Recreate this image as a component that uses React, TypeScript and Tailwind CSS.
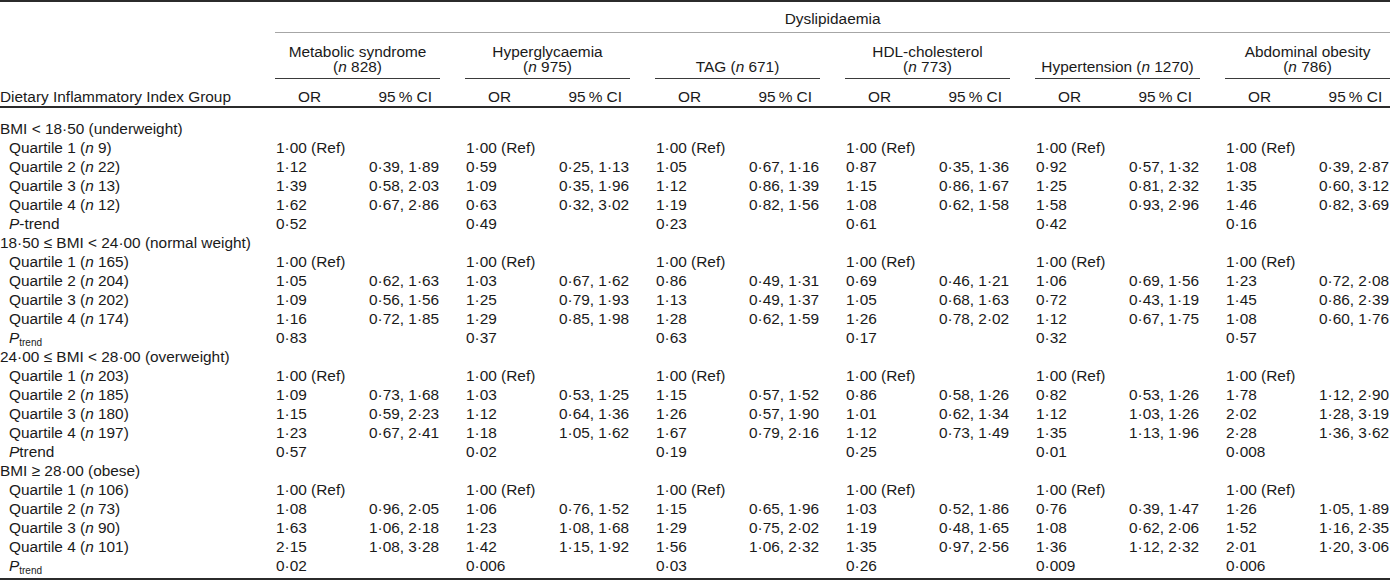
import type { ReactNode } from "react";

type Cell = [string, string];

const REF: Cell[] = Array.from({ length: 6 }, () => ["1·00 (Ref)", ""] as Cell);

const outcomes: { title: ReactNode }[] = [
  { title: <>Metabolic syndrome<br />(<i>n</i> 828)</> },
  { title: <>Hyperglycaemia<br />(<i>n</i> 975)</> },
  { title: <>TAG (<i>n</i> 671)</> },
  { title: <>HDL-cholesterol<br />(<i>n</i> 773)</> },
  { title: <>Hypertension (<i>n</i> 1270)</> },
  { title: <>Abdominal obesity<br />(<i>n</i> 786)</> },
];

const pRow = (vals: string[]): Cell[] => vals.map((v) => [v, ""] as Cell);

const groups: { title: ReactNode; rows: { label: ReactNode; cells: Cell[] }[] }[] = [
  {
    title: <>BMI &lt; 18·50 (underweight)</>,
    rows: [
      { label: <>Quartile 1 (<i>n</i> 9)</>, cells: REF },
      {
        label: <>Quartile 2 (<i>n</i> 22)</>,
        cells: [["1·12", "0·39, 1·89"], ["0·59", "0·25, 1·13"], ["1·05", "0·67, 1·16"], ["0·87", "0·35, 1·36"], ["0·92", "0·57, 1·32"], ["1·08", "0·39, 2·87"]],
      },
      {
        label: <>Quartile 3 (<i>n</i> 13)</>,
        cells: [["1·39", "0·58, 2·03"], ["1·09", "0·35, 1·96"], ["1·12", "0·86, 1·39"], ["1·15", "0·86, 1·67"], ["1·25", "0·81, 2·32"], ["1·35", "0·60, 3·12"]],
      },
      {
        label: <>Quartile 4 (<i>n</i> 12)</>,
        cells: [["1·62", "0·67, 2·86"], ["0·63", "0·32, 3·02"], ["1·19", "0·82, 1·56"], ["1·08", "0·62, 1·58"], ["1·58", "0·93, 2·96"], ["1·46", "0·82, 3·69"]],
      },
      { label: <><i>P</i>-trend</>, cells: pRow(["0·52", "0·49", "0·23", "0·61", "0·42", "0·16"]) },
    ],
  },
  {
    title: <>18·50 ≤ BMI &lt; 24·00 (normal weight)</>,
    rows: [
      { label: <>Quartile 1 (<i>n</i> 165)</>, cells: REF },
      {
        label: <>Quartile 2 (<i>n</i> 204)</>,
        cells: [["1·05", "0·62, 1·63"], ["1·03", "0·67, 1·62"], ["0·86", "0·49, 1·31"], ["0·69", "0·46, 1·21"], ["1·06", "0·69, 1·56"], ["1·23", "0·72, 2·08"]],
      },
      {
        label: <>Quartile 3 (<i>n</i> 202)</>,
        cells: [["1·09", "0·56, 1·56"], ["1·25", "0·79, 1·93"], ["1·13", "0·49, 1·37"], ["1·05", "0·68, 1·63"], ["0·72", "0·43, 1·19"], ["1·45", "0·86, 2·39"]],
      },
      {
        label: <>Quartile 4 (<i>n</i> 174)</>,
        cells: [["1·16", "0·72, 1·85"], ["1·29", "0·85, 1·98"], ["1·28", "0·62, 1·59"], ["1·26", "0·78, 2·02"], ["1·12", "0·67, 1·75"], ["1·08", "0·60, 1·76"]],
      },
      {
        label: <><i>P</i><sub className="text-[10px]">trend</sub></>,
        cells: pRow(["0·83", "0·37", "0·63", "0·17", "0·32", "0·57"]),
      },
    ],
  },
  {
    title: <>24·00 ≤ BMI &lt; 28·00 (overweight)</>,
    rows: [
      { label: <>Quartile 1 (<i>n</i> 203)</>, cells: REF },
      {
        label: <>Quartile 2 (<i>n</i> 185)</>,
        cells: [["1·09", "0·73, 1·68"], ["1·03", "0·53, 1·25"], ["1·15", "0·57, 1·52"], ["0·86", "0·58, 1·26"], ["0·82", "0·53, 1·26"], ["1·78", "1·12, 2·90"]],
      },
      {
        label: <>Quartile 3 (<i>n</i> 180)</>,
        cells: [["1·15", "0·59, 2·23"], ["1·12", "0·64, 1·36"], ["1·26", "0·57, 1·90"], ["1·01", "0·62, 1·34"], ["1·12", "1·03, 1·26"], ["2·02", "1·28, 3·19"]],
      },
      {
        label: <>Quartile 4 (<i>n</i> 197)</>,
        cells: [["1·23", "0·67, 2·41"], ["1·18", "1·05, 1·62"], ["1·67", "0·79, 2·16"], ["1·12", "0·73, 1·49"], ["1·35", "1·13, 1·96"], ["2·28", "1·36, 3·62"]],
      },
      { label: <><i>P</i>trend</>, cells: pRow(["0·57", "0·02", "0·19", "0·25", "0·01", "0·008"]) },
    ],
  },
  {
    title: <>BMI ≥ 28·00 (obese)</>,
    rows: [
      { label: <>Quartile 1 (<i>n</i> 106)</>, cells: REF },
      {
        label: <>Quartile 2 (<i>n</i> 73)</>,
        cells: [["1·08", "0·96, 2·05"], ["1·06", "0·76, 1·52"], ["1·15", "0·65, 1·96"], ["1·03", "0·52, 1·86"], ["0·76", "0·39, 1·47"], ["1·26", "1·05, 1·89"]],
      },
      {
        label: <>Quartile 3 (<i>n</i> 90)</>,
        cells: [["1·63", "1·06, 2·18"], ["1·23", "1·08, 1·68"], ["1·29", "0·75, 2·02"], ["1·19", "0·48, 1·65"], ["1·08", "0·62, 2·06"], ["1·52", "1·16, 2·35"]],
      },
      {
        label: <>Quartile 4 (<i>n</i> 101)</>,
        cells: [["2·15", "1·08, 3·28"], ["1·42", "1·15, 1·92"], ["1·56", "1·06, 2·32"], ["1·35", "0·97, 2·56"], ["1·36", "1·12, 2·32"], ["2·01", "1·20, 3·06"]],
      },
      {
        label: <><i>P</i><sub className="text-[10px]">trend</sub></>,
        cells: pRow(["0·02", "0·006", "0·03", "0·26", "0·009", "0·006"]),
      },
    ],
  },
];

function DataCells({ cells }: { cells: Cell[] }) {
  return (
    <>
      {cells.map(([or, ci], j) => (
        <>
          {j > 0 && <td key={`s${j}`} />}
          <td key={`o${j}`} className="pl-[1px]">{or}</td>
          <td key={`c${j}`} className="pl-[1px]">{ci}</td>
        </>
      ))}
    </>
  );
}

export default function App() {
  return (
    <div className="w-[1390px] bg-white font-['Liberation_Sans',Arial,sans-serif] text-[15.4px] leading-[19px] text-[#1a1a1a]">
      <div className="border-y-2 border-[#2b2b2b]">
        <table className="w-[1390px] table-fixed border-separate border-spacing-0 whitespace-nowrap">
          <colgroup>
            <col className="w-[275px]" />
            {outcomes.map((_, j) => (
              <>
                {j > 0 && <col className="w-[25px]" />}
                <col className="w-[93px]" />
                <col className="w-[72px]" />
              </>
            ))}
          </colgroup>
          <thead>
            <tr>
              <th />
              <th colSpan={17} className="border-b border-[#a6a6a6] pt-[7px] pb-[4px] text-center font-normal">
                Dyslipidaemia
              </th>
            </tr>
            <tr>
              <th />
              {outcomes.map((o, j) => (
                <>
                  {j > 0 && <th />}
                  <th
                    colSpan={2}
                    className="border-b border-[#3a3a3a] pt-[11px] pb-[4px] align-bottom text-center font-normal leading-[15px]"
                  >
                    {o.title}
                  </th>
                </>
              ))}
            </tr>
            <tr>
              <th className="border-b-2 border-[#2b2b2b] pt-[8px] text-left font-normal">
                Dietary Inflammatory Index Group
              </th>
              {outcomes.map((_, j) => (
                <>
                  {j > 0 && <th className="border-b-2 border-[#2b2b2b]" />}
                  <th className="border-b-2 border-[#2b2b2b] pt-[8px] pl-[23px] text-left font-normal">OR</th>
                  <th className="border-b-2 border-[#2b2b2b] pt-[8px] pr-[8px] text-right font-normal">
                    95{"\u2009"}% CI
                  </th>
                </>
              ))}
            </tr>
          </thead>
          <tbody>
            <tr>
              <td colSpan={18} className="h-[11px] p-0" />
            </tr>
            {groups.map((g, gi) => (
              <>
                <tr key={`g${gi}`}>
                  <td colSpan={18}>{g.title}</td>
                </tr>
                {g.rows.map((r, ri) => (
                  <tr key={`r${gi}-${ri}`}>
                    <td className="pl-[9px]">{r.label}</td>
                    <DataCells cells={r.cells} />
                  </tr>
                ))}
              </>
            ))}
            <tr>
              <td colSpan={18} className="h-[3px] p-0" />
            </tr>
          </tbody>
        </table>
      </div>
    </div>
  );
}
